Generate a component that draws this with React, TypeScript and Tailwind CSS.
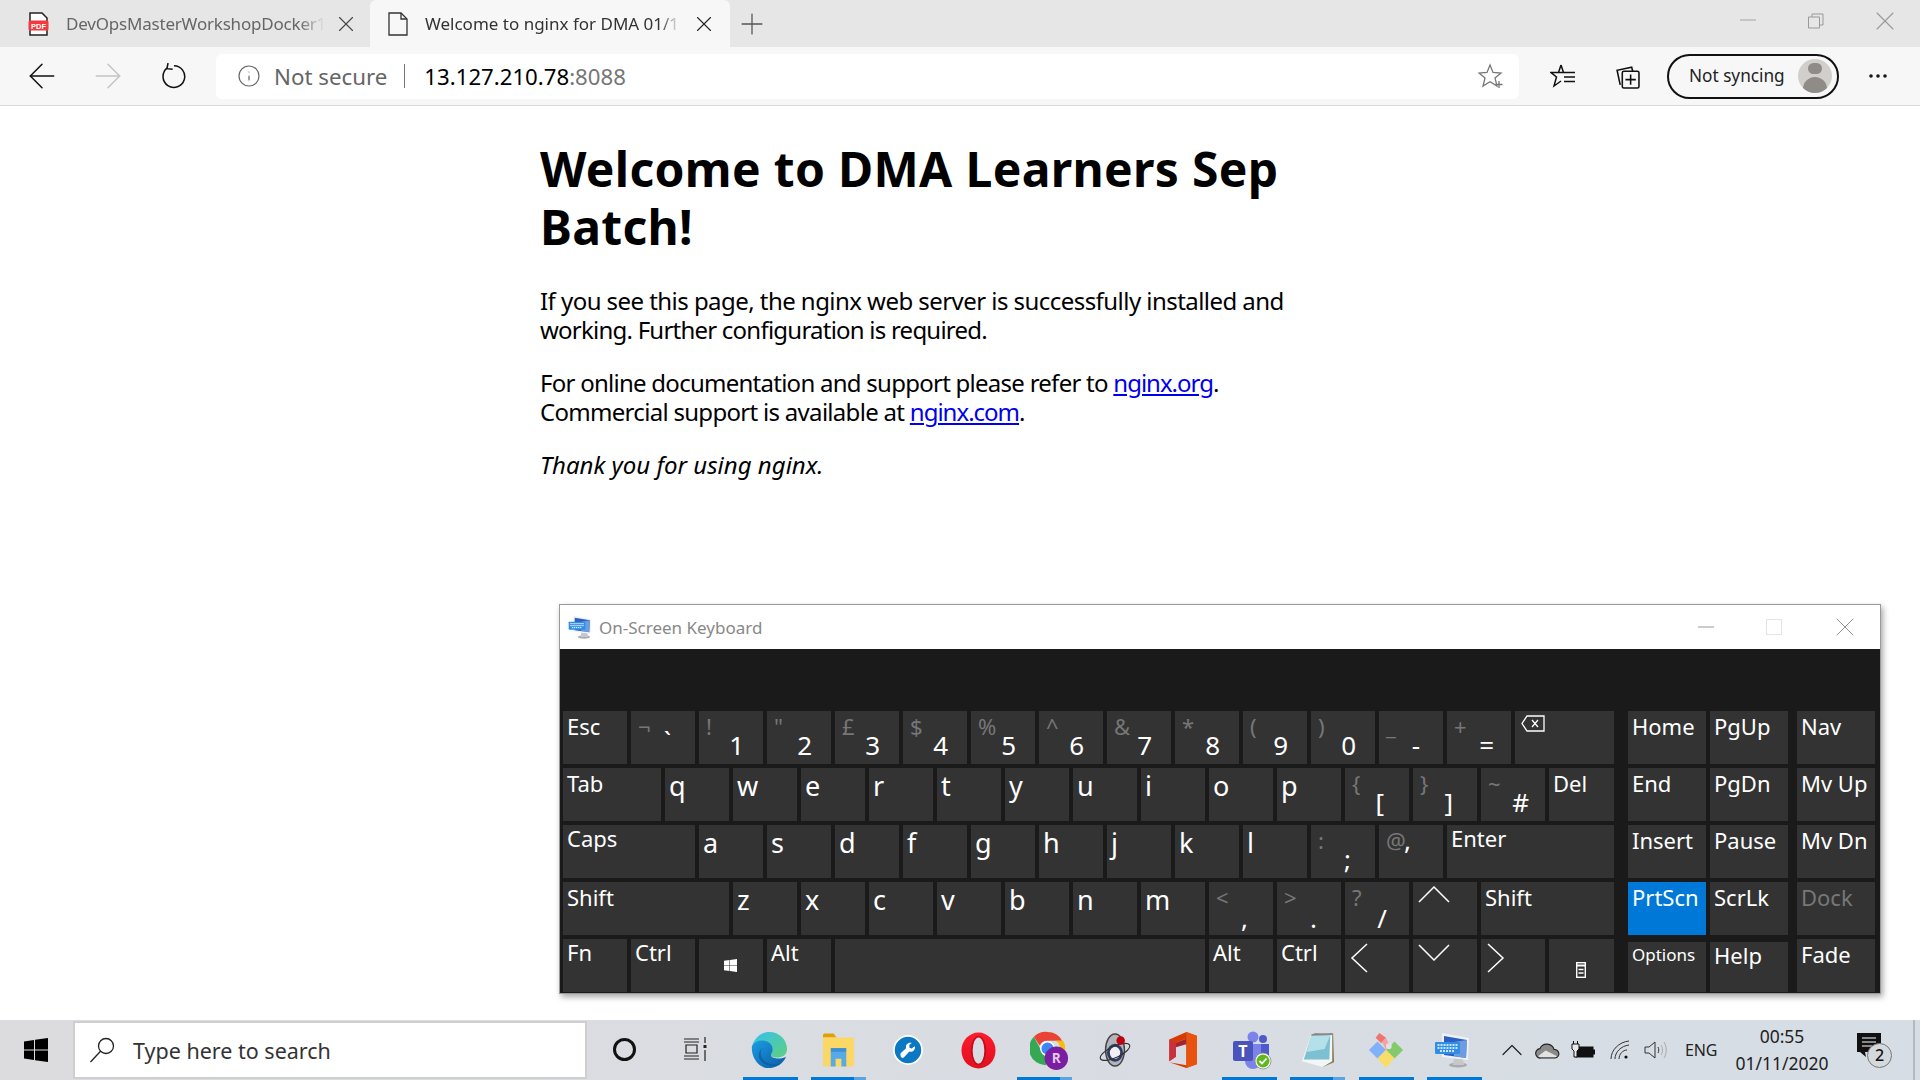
import React from 'react';
import { ArrowLeft, ArrowRight, Info, MoreHorizontal, Plus, X, Minus, ChevronUp } from 'lucide-react';

type KeyDef = {
  label?: string;
  top?: string; // dim shifted symbol
  pos?: string; // where the main symbol sits on a two-symbol key
  w?: string;
  lower?: boolean; // letter keys sit a bit bigger
  icon?: React.ReactNode;
};

const K = 'w-[64px]';

const rows: KeyDef[][] = [
  [
    { label: 'Esc' },
    { top: '¬', label: '`', pos: 'right-[24px] bottom-[6px]' },
    { top: '!', label: '1' },
    { top: '"', label: '2' },
    { top: '£', label: '3' },
    { top: '$', label: '4' },
    { top: '%', label: '5' },
    { top: '^', label: '6' },
    { top: '&', label: '7' },
    { top: '*', label: '8' },
    { top: '(', label: '9' },
    { top: ')', label: '0' },
    { top: '_', label: '-', pos: 'right-[23px] bottom-[2px]' },
    { top: '+', label: '=', pos: 'right-[17px] bottom-[2px]' },
    { w: 'w-[99px]', icon: <BackspaceIcon /> },
  ],
  [
    { label: 'Tab', w: 'w-[98px]' },
    ...'qwertyuiop'.split('').map((c) => ({ label: c, lower: true })),
    { top: '{', label: '[', pos: 'right-[25px] bottom-[2px]' },
    { top: '}', label: ']', pos: 'right-[24px] bottom-[2px]' },
    { top: '~', label: '#', pos: 'right-[16px] bottom-[2px]' },
    { label: 'Del', w: 'w-[65px]' },
  ],
  [
    { label: 'Caps', w: 'w-[132px]' },
    ...'asdfghjkl'.split('').map((c) => ({ label: c, lower: true })),
    { top: ':', label: ';', pos: 'right-[24px] bottom-[2px]' },
    { top: '@', label: ',', pos: 'right-[32px] bottom-[21px]' },
    { label: 'Enter', w: 'w-[167px]' },
  ],
  [
    { label: 'Shift', w: 'w-[166px]' },
    ...'zxcvbnm'.split('').map((c) => ({ label: c, lower: true })),
    { top: '<', label: ',', pos: 'right-[25px] bottom-[0px]' },
    { top: '>', label: '.', pos: 'right-[24px] bottom-[0px]' },
    { top: '?', label: '/', pos: 'right-[22px] bottom-[0px]' },
    {
      icon: (
        <svg viewBox="0 0 32 17" className="w-[32px] h-[17px] mt-[4px] ml-[5px]" fill="none" stroke="white" strokeWidth="1.500">
          <path d="M1 16 16 1l15 15" />
        </svg>
      ),
    },
    { label: 'Shift', w: 'w-[133px]' },
  ],
  [
    { label: 'Fn' },
    { label: 'Ctrl' },
    { icon: <WinIcon className="size-[13px] mt-[20px] ml-[25px] fill-white" /> },
    { label: 'Alt' },
    { w: 'w-[370px]' },
    { label: 'Alt' },
    { label: 'Ctrl' },
    {
      icon: (
        <svg viewBox="0 0 18 30" className="w-[18px] h-[30px] mt-[4px] ml-[5px]" fill="none" stroke="white" strokeWidth="1.500">
          <path d="M17 1 2 15l15 14" />
        </svg>
      ),
    },
    {
      icon: (
        <svg viewBox="0 0 32 17" className="w-[32px] h-[17px] mt-[5px] ml-[5px]" fill="none" stroke="white" strokeWidth="1.500">
          <path d="M1 1l15 15L31 1" />
        </svg>
      ),
    },
    {
      icon: (
        <svg viewBox="0 0 18 30" className="w-[18px] h-[30px] mt-[4px] ml-[6px]" fill="none" stroke="white" strokeWidth="1.500">
          <path d="M1 1l15 14L1 29" />
        </svg>
      ),
    },
    { w: 'w-[65px]', icon: <MenuKeyIcon /> },
  ],
];

const navRows = [
  ['Home', 'PgUp', 'Nav'],
  ['End', 'PgDn', 'Mv Up'],
  ['Insert', 'Pause', 'Mv Dn'],
  ['PrtScn', 'ScrLk', 'Dock'],
  ['Options', 'Help', 'Fade'],
];

function BackspaceIcon() {
  return (
    <svg viewBox="0 0 26 20" className="w-[26px] h-[20px] mt-[3px] ml-[5px]" fill="none" stroke="white" strokeWidth="1.300">
      <path d="M7 2h17v15H7l-5-7.500z" />
      <path d="M12 6l6 7M18 6l-6 7" />
    </svg>
  );
}

function WinIcon({ className }: { className?: string }) {
  return (
    <svg viewBox="0 0 24 24" className={className}>
      <path d="M0 3.400 10 2v9.400H0zM11 1.800 24 0v11.400H11zM0 12.600h10V22L0 20.600zM11 12.600h13V24l-13-1.800z" />
    </svg>
  );
}

function MenuKeyIcon() {
  return (
    <svg viewBox="0 0 10 16" className="w-[10px] h-[16px] mt-[23px] ml-[27px]" fill="none" stroke="white" strokeWidth="1.400">
      <rect x="0.700" y="0.700" width="8.600" height="14.600" />
      <path d="M0.700 3.500h8.600" strokeWidth="2" />
      <path d="M2.500 7.500h5M2.500 11h5" />
    </svg>
  );
}

function Key({ k, raised }: { k: KeyDef; raised?: boolean }) {
  const w = k.w ?? K;
  if (k.top !== undefined) {
    return (
      <div className={`${w} relative h-full bg-[#333333] text-white shrink-0`}>
        <span className="absolute left-[7px] top-[0px] text-[22px] leading-[30px] text-[#777777]">{k.top}</span>
        <span className={`absolute ${k.pos ?? 'right-[19px] bottom-[2px]'} text-[26px] leading-[34px]`}>{k.label}</span>
      </div>
    );
  }
  return (
    <div className={`${w} h-full bg-[#333333] text-white shrink-0`}>
      {k.icon}
      {k.label && (
        <div className={k.lower ? 'pl-[4px] -mt-[1px] text-[27px] leading-[38px]' : `pl-[4px] pt-[1px] text-[22px] leading-[28px] ${raised ? '-mt-[2px]' : ''}`}>
          {k.label}
        </div>
      )}
    </div>
  );
}

function OskIcon({ className }: { className?: string }) {
  return (
    <svg viewBox="0 0 36 36" className={className}>
      <ellipse cx="24" cy="33" rx="9" ry="2.500" fill="#a9abae" />
      <path d="M20 26l9 1 1 6H19z" fill="#c5c7ca" />
      <path d="M8 1l27 5-1 22L8 25z" fill="#eef2f8" />
      <path d="M10 4l23 4-1 18-22-3z" fill="#2b5fc0" />
      <path d="M20 10l13-2-1 18-12-2z" fill="#8ab8ee" opacity="0.700" />
      <rect x="1" y="10" width="25" height="12" rx="1" fill="#2f8fe8" />
      <path d="M3.500 13h20M3.500 16h20M6 19h15" stroke="white" strokeWidth="1.500" strokeDasharray="2 1" />
    </svg>
  );
}

function Underline({ kind }: { kind?: 'on' | 'stack' }) {
  if (!kind) return <div className="h-[3px]" />;
  if (kind === 'on') return <div className="h-[3px] bg-[#0078d7]" />;
  return (
    <div className="h-[3px] flex">
      <div className="flex-1 bg-[#0078d7]" />
      <div className="w-[12px] bg-[#5ba4e0]" />
    </div>
  );
}

const taskIcons: { kind?: 'on' | 'stack'; icon: React.ReactNode }[] = [
  {
    kind: 'on',
    icon: (
      <svg viewBox="0 0 40 40" className="size-[38px] mr-[4px]">
        <defs>
          <linearGradient id="edgeA" x1="0" y1="0" x2="1" y2="1">
            <stop offset="0" stopColor="#35c1f1" />
            <stop offset="1" stopColor="#5fd07c" />
          </linearGradient>
          <linearGradient id="edgeB" x1="0" y1="0" x2="1" y2="1">
            <stop offset="0" stopColor="#1b9de2" />
            <stop offset="1" stopColor="#0c59a4" />
          </linearGradient>
        </defs>
        <path d="M20 1c11 0 19 8 19 18 0 6-5 9-10 9-4 0-7-1-7-3 0-1 2-2 2-5 0-5-5-9-11-9-5 0-9 2-11 6C4 8 11 1 20 1z" fill="url(#edgeA)" />
        <path d="M2 16c2-4 6-6 11-6 6 0 11 4 11 10 0 3-2 4-2 5 0 3 4 4 8 4 3 0 6-1 8-2-3 7-10 12-19 12C10 39 1 29 2 16z" fill="url(#edgeB)" />
        <path d="M13 18c-3 4-2 11 4 15 5 3 11 3 17 1-7 3-15 4-21-1-5-4-5-11 0-15z" fill="#0b4c8f" opacity="0.500" />
      </svg>
    ),
  },
  {
    kind: 'stack',
    icon: (
      <svg viewBox="0 0 34 38" className="w-[33px] h-[38px]">
        <path d="M1 4a2 2 0 0 1 2-2h9l3 4H1z" fill="#e0a000" />
        <rect x="1" y="6" width="32" height="30" rx="1" fill="#fbd766" />
        <path d="M9 17h16v4H9z" fill="#3c8fd9" />
        <path d="M9 21h16v15h-5v-8h-6v8H9z" fill="#57a9e8" />
      </svg>
    ),
  },
  {
    icon: (
      <svg viewBox="0 0 32 32" className="size-[30px] ml-[2px]">
        <circle cx="16" cy="16" r="15" fill="#0a78c2" stroke="white" strokeWidth="1.800" />
        <path d="M8 22.500a2.500 2.500 0 0 0 3.500 1.500l6-6.500c3 1 6-1 6-4.500l-.5-1-3 2.500-2.500-1 0-3 2.500-2c-4-1-7 2-6 5.500L8 19.500z" fill="white" />
      </svg>
    ),
  },
  {
    icon: (
      <svg viewBox="0 0 36 38" className="w-[35px] h-[37px] ml-[5px]">
        <defs>
          <linearGradient id="operaR" x1="0" y1="0" x2="0" y2="1">
            <stop offset="0" stopColor="#ff1b2d" />
            <stop offset="1" stopColor="#e01020" />
          </linearGradient>
        </defs>
        <ellipse cx="18" cy="19" rx="17.500" ry="18.500" fill="url(#operaR)" />
        <ellipse cx="18" cy="19" rx="8" ry="15" fill="#c20e1c" />
        <ellipse cx="18" cy="19" rx="6" ry="13.500" fill="#d8dbe0" />
      </svg>
    ),
  },
  {
    kind: 'stack',
    icon: (
      <svg viewBox="0 0 40 40" className="size-[39px] ml-[10px]">
        <path d="M18 1a17 17 0 0 1 15 9H18a8 8 0 0 0-8 5L4 6a17 17 0 0 1 14-5z" fill="#ea4335" />
        <path d="M34 10a17 17 0 0 1-13 25l6-11a8 8 0 0 0-1-14z" fill="#fbbc05" />
        <path d="M4 6l7 13a8 8 0 0 0 9 6l-4 10A17 17 0 0 1 4 6z" fill="#34a853" />
        <circle cx="18" cy="18" r="7" fill="#4285f4" stroke="white" strokeWidth="1.500" />
        <circle cx="27" cy="28" r="12" fill="#7b1fa2" />
        <text x="27" y="33" textAnchor="middle" fontSize="14" fontWeight="700" fill="#e3c7ee" fontFamily="Open Sans, sans-serif">R</text>
      </svg>
    ),
  },
  {
    icon: (
      <svg viewBox="0 0 36 36" className="size-[34px] ml-[5px]">
        <ellipse cx="18" cy="18" rx="10" ry="17" fill="#b3b5bb" stroke="#444" strokeWidth="1.500" />
        <ellipse cx="18" cy="21" rx="7" ry="8" fill="#f0f0f4" stroke="#2f3a66" strokeWidth="3" />
        <ellipse cx="18" cy="20" rx="17" ry="6" fill="none" stroke="#333" strokeWidth="1.200" transform="rotate(-25 18 20)" />
        <circle cx="24" cy="8" r="4.500" fill="#c00010" />
      </svg>
    ),
  },
  {
    icon: (
      <svg viewBox="0 0 30 38" className="w-[29px] h-[36px] ml-[5px]">
        <path d="M0 8 18 0l11 4v30l-11 4-18-6 18 3V7L7 11v15l-7 5z" fill="#d83b01" />
        <path d="M18 0l11 4v30l-11 4z" fill="#e8540f" />
        <path d="M7 11l11-4v6L7 16z" fill="#a4262c" />
        <path d="M0 8l7 3v15l-7 5z" fill="#c8313e" />
      </svg>
    ),
  },
  {
    kind: 'on',
    icon: (
      <svg viewBox="0 0 40 40" className="size-[40px] ml-[5px]">
        <circle cx="21" cy="7" r="5.500" fill="#7b83eb" />
        <circle cx="31" cy="9" r="4" fill="#5059c9" />
        <path d="M26 14h11v14a6 6 0 0 1-11 3z" fill="#5059c9" />
        <path d="M13 14h16v17a8 8 0 0 1-16 0z" fill="#7b83eb" />
        <rect x="1" y="11" width="20" height="20" rx="2" fill="#4b53bc" />
        <text x="11" y="27" textAnchor="middle" fontSize="16" fontWeight="700" fill="white" fontFamily="Open Sans, sans-serif">T</text>
        <circle cx="31" cy="31" r="8" fill="white" stroke="#888" strokeWidth="0.800" />
        <circle cx="31" cy="31" r="6.500" fill="#5fb820" />
        <path d="M27.500 31l2.500 2.500 4.500-5" stroke="white" strokeWidth="1.800" fill="none" />
      </svg>
    ),
  },
  {
    kind: 'stack',
    icon: (
      <svg viewBox="0 0 36 40" className="w-[34px] h-[38px]">
        <path d="M14 2h20l1 31-12 5z" fill="#8b7a55" />
        <path d="M11 3l22-1 0 30-10 6L1 32z" fill="#f2f6f6" />
        <path d="M11 5l20-1-1 26L3 30z" fill="#7cc0d2" />
        <path d="M11 5l20-1-6 15L6 22z" fill="#b4e0ea" />
        <path d="M11 3l22-1v2L11 5z" fill="#888" />
      </svg>
    ),
  },
  {
    kind: 'on',
    icon: (
      <svg viewBox="0 0 38 40" className="w-[36px] h-[38px]">
        <path d="M1 20 10 11l9 9-9 9z" fill="#7fb2fb" />
        <path d="M19 20l9-9 9 9-9 9z" fill="#84c96a" />
        <path d="M10 29l9-9 9 9-9 10z" fill="#f8dd6a" />
        <path d="M12 2l7 5-5 6-6-6z" fill="#ef7470" />
        <path d="M19 7l4 9-4 4-4-8z" fill="#f8a0a0" />
        <circle cx="22" cy="16" r="3" fill="#e0e4ea" />
      </svg>
    ),
  },
  { kind: 'on', icon: <OskIcon className="size-[36px] mr-[5px]" /> },
];

export default function App() {
  return (
    <div className="relative w-[1920px] h-[1080px] overflow-hidden flex flex-col bg-white font-['Noto_Sans',sans-serif]">
      {/* Tab strip */}
      <div className="h-[47px] bg-[#e6e6e6] flex items-stretch shrink-0">
        <div className="w-[370px] flex items-center pl-[28px] text-[#666666]">
          <svg viewBox="0 0 20 24" className="w-[21px] h-[24px] shrink-0">
            <path d="M1.500 1h12l5 5v17h-17z" fill="white" stroke="#222" strokeWidth="1.500" />
            <rect x="0" y="8.500" width="20" height="10" rx="1.500" fill="#f03a3e" />
            <text x="10" y="16.500" textAnchor="middle" fontSize="7.500" fontWeight="700" fill="white" fontFamily="Liberation Sans, sans-serif">PDF</text>
          </svg>
          <span className="ml-[17px] w-[259px] overflow-hidden whitespace-nowrap text-[17px] tracking-[-0.2px] [mask-image:linear-gradient(to_right,black_90%,transparent)]">DevOpsMasterWorkshopDocker1</span>
          <X className="size-[26px] ml-[8px] text-[#444] shrink-0" strokeWidth={1} />
        </div>
        <div className="w-[360px] bg-[#f7f7f7] rounded-t-[6px] flex items-center pl-[18px] text-[#333333]">
          <svg viewBox="0 0 20 24" className="w-[20px] h-[24px] shrink-0" fill="none" stroke="#333" strokeWidth="1.300">
            <path d="M1 1h12l6 6v16H1z" />
            <path d="M13 1v6h6" />
          </svg>
          <span className="ml-[17px] w-[255px] overflow-hidden whitespace-nowrap text-[17px] [mask-image:linear-gradient(to_right,black_92%,transparent)]">Welcome to nginx for DMA 01/1</span>
          <X className="size-[26px] ml-[11px] text-[#222] shrink-0" strokeWidth={1} />
        </div>
        <Plus className="size-[34px] ml-[5px] self-center text-[#555]" strokeWidth={0.9} />
        <div className="flex-1" />
        <Minus className="size-[26px] mt-[7px] text-[#999]" strokeWidth={0.8} />
        <svg viewBox="0 0 16 16" className="size-[16px] ml-[47px] mt-[13px]" fill="none" stroke="#999" strokeWidth="1">
          <path d="M0.500 4h11v11h-11zM4 4V1h11v11h-3.500" />
        </svg>
        <X className="size-[32px] ml-[45px] mr-[19px] mt-[5px] text-[#999]" strokeWidth={0.8} />
      </div>

      {/* Toolbar */}
      <div className="h-[59px] bg-[#f7f7f7] border-b border-[#d8d8d8] flex items-center shrink-0">
        <ArrowLeft className="size-[40px] ml-[22px] text-[#111]" strokeWidth={0.9} />
        <ArrowRight className="size-[40px] ml-[26px] text-[#c4c4c4]" strokeWidth={0.9} />
        <svg viewBox="0 0 24 24" className="size-[26px] ml-[33px]" fill="none" stroke="#111" strokeWidth="1.400">
          <path d="M12 2.500a10 10 0 1 1-6.500 2.300" />
          <path d="M6.500 0 5.500 5.200l5.300.5" />
        </svg>
        <div className="ml-[29px] w-[1303px] h-[45px] bg-white rounded-[6px] flex items-center">
          <Info className="size-[24px] ml-[21px] text-[#666]" strokeWidth={1.2} />
          <span className="ml-[13px] mt-[1px] text-[22.300px] text-[#666]">Not secure</span>
          <div className="ml-[17px] w-px h-[24px] bg-[#777]" />
          <span className="ml-[19px] mt-[1px] text-[22.200px] text-black">13.127.210.78<span className="text-[#767676]">:8088</span></span>
          <div className="flex-1" />
          <svg viewBox="0 0 26 26" className="size-[26px] mr-[15px]" fill="none" stroke="#777" strokeWidth="1.300">
            <path d="M12 2l3 7.500 8 .5-6 5 2 8-7-4.300L5 23l2-8-6-5 8-.5z" />
            <path d="M21 18v7M17.500 21.500h7" />
          </svg>
        </div>
        <svg viewBox="0 0 26 26" className="size-[26px] ml-[31px]" fill="none" stroke="#111" strokeWidth="1.500">
          <path d="M11 2l2.500 7.500H8M11 2 8.500 9.500H1l5.500 4.500L4 23l7-5" />
          <path d="M14 9.500h11M14 14h11M14 18.500h11" />
        </svg>
        <svg viewBox="0 0 24 24" className="size-[25px] ml-[39px]" fill="none" stroke="#111" strokeWidth="1.500">
          <path d="M5 20 2 6l14-3 1 4" />
          <rect x="7" y="7" width="16" height="16" rx="1.500" />
          <path d="M15 10v10M10 15h10" />
        </svg>
        <div className="ml-[27px] w-[172px] h-[45px] border-2 border-[#111] rounded-full flex items-center pl-[20px]">
          <span className="text-[17.200px] text-[#222] whitespace-nowrap">Not syncing</span>
          <div className="ml-[13px] size-[34px] rounded-full bg-[#d0cfcb] overflow-hidden shrink-0 relative flex flex-col items-center">
            <div className="mt-[4px] size-[14px] rounded-full bg-[#8f8c87]" />
            <div className="mt-[3px] w-[24px] h-[20px] rounded-t-full bg-[#8f8c87]" />
          </div>
        </div>
        <MoreHorizontal className="size-[24px] ml-[27px] text-[#111]" strokeWidth={1.6} />
      </div>

      {/* Page */}
      <div className="flex-1 min-h-0 text-black">
        <div className="w-[840px] mx-auto pt-[34px]">
          <h1 className="text-[48px] leading-[58px] font-bold tracking-[0.33px]">
            Welcome to DMA Learners Sep<br />Batch!
          </h1>
          <p className="mt-[30px] text-[24px] leading-[29px]">
            <span className="tracking-[-0.55px]">If you see this page, the nginx web server is successfully installed and</span><br />
            <span className="tracking-[-0.77px]">working. Further configuration is required.</span>
          </p>
          <p className="mt-[24px] text-[24px] leading-[29px] tracking-[-0.74px]">
            For online documentation and support please refer to <a className="text-[#0000ee] underline tracking-[-1px]" href="#">nginx.org</a>.<br />
            <span className="tracking-[-0.7px]">Commercial support is available at </span><a className="text-[#0000ee] underline tracking-[-1px]" href="#">nginx.com</a>.
          </p>
          <p className="mt-[24px] text-[24px] leading-[29px] italic">Thank you for using nginx.</p>
        </div>
      </div>

      {/* Taskbar */}
      <div className="h-[60px] shrink-0 bg-gradient-to-r from-[#dcdcdf] to-[#d6dde5] flex items-stretch">
        <div className="w-[73px] flex items-center justify-center">
          <WinIcon className="size-[24px] fill-black -ml-[1px]" />
        </div>
        <div className="w-[514px] my-[1px] bg-white border-2 border-[#cfcfcf] flex items-center">
          <svg viewBox="0 0 26 26" className="size-[26px] ml-[14px] shrink-0" fill="none" stroke="#222" strokeWidth="1.300">
            <circle cx="17" cy="9" r="7.500" />
            <path d="M11.500 14.300 1.500 25" />
          </svg>
          <span className="ml-[18px] mt-[3px] text-[21.500px] text-[#333]">Type here to search</span>
        </div>
        <div className="w-[74px] flex items-center justify-center">
          <div className="size-[23px] rounded-full border-[3px] border-[#111] -mt-[2px]" />
        </div>
        <div className="w-[70px] flex items-center justify-center">
          <svg viewBox="0 0 24 24" className="size-[24px] -mt-[2px]" fill="none" stroke="#222" strokeWidth="1.200">
            <path d="M0 2h15M0 5h15M2 8h11v8H2zM0 19h15M0 22h15" />
            <path d="M21 0v6M21 13v11" />
            <rect x="19.500" y="8" width="3" height="3" fill="#222" stroke="none" />
          </svg>
        </div>
        <div className="ml-[12px] flex gap-[13.400px]">
          {taskIcons.map((t, i) => (
            <div key={i} className="w-[55px] flex flex-col">
              <div className="flex-1 flex items-center justify-center pt-[3px]">{t.icon}</div>
              <Underline kind={t.kind} />
            </div>
          ))}
        </div>
        <div className="flex-1" />
        {/* Tray */}
        <div className="flex items-center text-[#222]">
          <ChevronUp className="size-[36px] mr-[5px] text-[#222]" strokeWidth={0.8} />
          <svg viewBox="0 0 26 18" className="w-[25px] h-[17px] mr-[11px]">
            <path d="M6 17a5 5 0 0 1-1-10 8 8 0 0 1 15 1 4.500 4.500 0 0 1 1 9z" fill="#8a8a8a" />
            <path d="M3 15l8-6 6 3 6 3-1 1.500H5z" fill="#e2e2e2" />
            <path d="M6 17a5 5 0 0 1-1-10 8 8 0 0 1 15 1 4.500 4.500 0 0 1 1 9z" fill="none" stroke="#222" strokeWidth="1.200" />
          </svg>
          <svg viewBox="0 0 24 18" className="w-[24px] h-[18px] mr-[15px]" stroke="#111" fill="none" strokeWidth="1">
            <rect x="5" y="6" width="17" height="10" fill="#111" />
            <rect x="22" y="9" width="2" height="4" fill="#111" />
            <path d="M1 3h7v5L6 10v6H3v-6L1 8z" fill="#e8eaee" />
            <path d="M2.500 0v3M6.500 0v3" />
          </svg>
          <svg viewBox="0 0 20 20" className="size-[20px] mr-[14px]" fill="none" stroke="#333" strokeWidth="1">
            <path d="M1 19C1 10 9 2 19 1M5 19C5 12 11 6 19 5M9 19c0-5 4-9 8-9" />
            <circle cx="16" cy="17" r="1.600" fill="#111" stroke="none" />
          </svg>
          <svg viewBox="0 0 23 20" className="w-[23px] h-[20px] mr-[18px]" fill="none" stroke="#333" strokeWidth="1">
            <path d="M1 7h4l6-5v16l-6-5H1z" />
            <path d="M14 7c1 2 1 4 0 6" />
            <path d="M17 5c2 3 2 7 0 10M20 2c3 5 3 11 0 16" stroke="#aaa" />
          </svg>
          <span className="text-[16px] w-[33px] tracking-[-0.2px] whitespace-nowrap -mt-[1px]">ENG</span>
          <div className="ml-[10px] w-[108px] flex flex-col items-center text-[17.500px] leading-[27px]">
            <span>00:55</span>
            <span>01/11/2020</span>
          </div>
          <div className="ml-[21px] w-[35px] h-[35px] relative mr-[21px]">
            <svg viewBox="0 0 25 25" className="w-[25px] h-[25px]">
              <path d="M0 0h24v19H8l1 5-6-5H0z" fill="#111" />
              <path d="M5 5h14M5 9h14M5 13h10" stroke="white" strokeWidth="1.200" />
            </svg>
            <div className="absolute right-0 bottom-0 size-[25px] rounded-full bg-[#d5d9de] border border-[#777] flex items-center justify-center text-[16px] font-medium text-[#111]">2</div>
          </div>
        </div>
        <div className="w-[2px] bg-[#b5b8bc] mr-[5px]" />
      </div>

      {/* On-Screen Keyboard floats over the page */}
      <div className="absolute left-[559px] top-[604px] w-[1322px] h-[390px] border border-[#9a9a9a] shadow-[2px_3px_6px_rgba(0,0,0,0.35)] flex flex-col bg-[#1a1a1a]">
        <div className="h-[44px] bg-white flex items-center shrink-0">
          <OskIcon className="size-[24px] ml-[8px] shrink-0" />
          <span className="ml-[7px] mt-[1px] text-[17px] text-[#888888]">On-Screen Keyboard</span>
          <div className="flex-1" />
          <Minus className="size-[26px] text-[#888]" strokeWidth={0.8} />
          <div className="ml-[47px] size-[16px] border border-[#e4e4e4]" />
          <X className="size-[32px] ml-[47px] mr-[19px] text-[#888]" strokeWidth={0.7} />
        </div>
        <div className="flex flex-1 pl-[3px] pt-[62px] pr-[5px] pb-[3px] text-white">
          <div className="flex flex-col gap-[4px] w-[1051px]">
            {rows.map((row, i) => (
              <div key={i} className="flex gap-[4px] h-[53px]">
                {row.map((k, j) => (
                  <Key key={j} k={k} raised={i === 2 || i === 4} />
                ))}
              </div>
            ))}
          </div>
          <div className="ml-[14px] flex flex-col gap-[4px]">
            {navRows.map((row, i) => (
              <div key={i} className="flex gap-[4px] h-[53px]">
                {row.map((label, j) => {
                  const isPrt = label === 'PrtScn';
                  const isDock = label === 'Dock';
                  const small = label === 'Options';
                  const low = small || label === 'Help';
                  return (
                    <div
                      key={label}
                      className={`w-[78px] ${j === 1 ? 'mr-[5px]' : ''} ${low ? 'mt-[3px] leading-[26px]' : 'leading-[30px]'} ${isPrt ? 'bg-[#0078d7]' : 'bg-[#333333]'} ${isDock ? 'text-[#777777]' : 'text-white'} ${small ? 'text-[17px]' : 'text-[22px]'} pl-[4px] whitespace-nowrap`}
                    >
                      {label}
                    </div>
                  );
                })}
              </div>
            ))}
          </div>
        </div>
      </div>
    </div>
  );
}
